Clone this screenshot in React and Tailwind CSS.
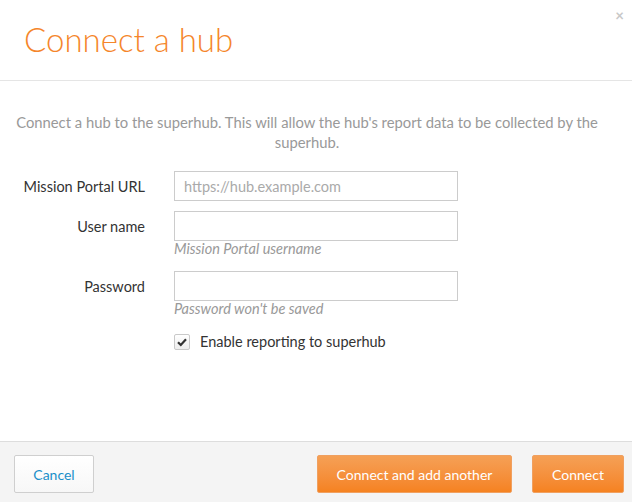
import React, { useState } from "react";

const font = { fontFamily: "Lato, 'Open Sans', sans-serif" };

const Field = ({ label, placeholder, help, type = "text" }) => (
  <div className="flex items-start">
    <label className="w-[145px] shrink-0 pt-[5px] text-right text-[14.5px] text-[#333]">
      {label}
    </label>
    <div className="ml-[29px] flex flex-col">
      <input
        type={type}
        placeholder={placeholder}
        className="h-[30px] w-[284px] border border-[#cccccc] bg-white px-[9px] text-[14.5px] text-[#555] outline-none placeholder:text-[#aaa]"
      />
      {help && (
        <span className="-mt-[1px] mb-[3px] text-[14.5px] italic leading-[18px] text-[#999]">{help}</span>
      )}
    </div>
  </div>
);

export default function App() {
  const [checked, setChecked] = useState(true);

  return (
    <div className="relative flex h-[502px] w-[632px] flex-col bg-white" style={font}>
      <button className="absolute right-[8px] top-[4px] text-[15px] font-bold text-[#c8c8c8]">×</button>

      <div className="h-[81px] shrink-0 border-b border-[#e5e5e5] pl-[24px] pt-[18px]">
        <h1 className="text-[33px] font-light leading-[42px] text-[#f5862b]">Connect a hub</h1>
      </div>

      <div className="flex-1 px-[12px] pt-[31px]">
        <p className="-ml-[12px] mr-[6px] text-center text-[14.8px] leading-[20px] text-[#999]">
          Connect a hub to the superhub. This will allow the hub's report data to be collected by the superhub.
        </p>

        <div className="-ml-[12px] mt-[19px] flex flex-col gap-[10px]">
          <Field label="Mission Portal URL" placeholder="https://hub.example.com" />
          <Field label="User name" help="Mission Portal username" />
          <Field label="Password" type="password" help="Password won't be saved" />
        </div>

        <label className="ml-[162px] mt-[10px] flex items-center gap-[10px] text-[14.5px] text-[#333]">
          <span
            onClick={() => setChecked(!checked)}
            className="flex h-[16px] w-[16px] items-center justify-center rounded-[2px] border border-[#c9c9c9] bg-gradient-to-b from-white to-[#eee]"
          >
            {checked && (
              <svg width="12" height="12" viewBox="0 0 12 12">
                <path d="M2 6.2 L4.8 9 L10 3.2" fill="none" stroke="#333" strokeWidth="2.2" />
              </svg>
            )}
          </span>
          Enable reporting to superhub
        </label>
      </div>

      <div className="flex h-[61px] shrink-0 items-start border-t border-[#dddddd] bg-[#f4f4f4] px-[14px] pt-[13px]">
        <button className="h-[38px] w-[80px] rounded-[2px] border border-[#cfcfcf] bg-gradient-to-b from-white to-[#f7f7f7] text-[14px] text-[#1a8fc9]">
          Cancel
        </button>
        <div className="-mr-[6px] ml-auto flex gap-[20px]">
          <button className="h-[38px] w-[195px] rounded-[2px] border border-[#f0a060] bg-gradient-to-b from-[#f5a055] to-[#f58220] text-[14px] text-white">
            Connect and add another
          </button>
          <button className="h-[38px] w-[92px] rounded-[2px] border border-[#f0a060] bg-gradient-to-b from-[#f5a055] to-[#f58220] text-[14px] text-white">
            Connect
          </button>
        </div>
      </div>
    </div>
  );
}
